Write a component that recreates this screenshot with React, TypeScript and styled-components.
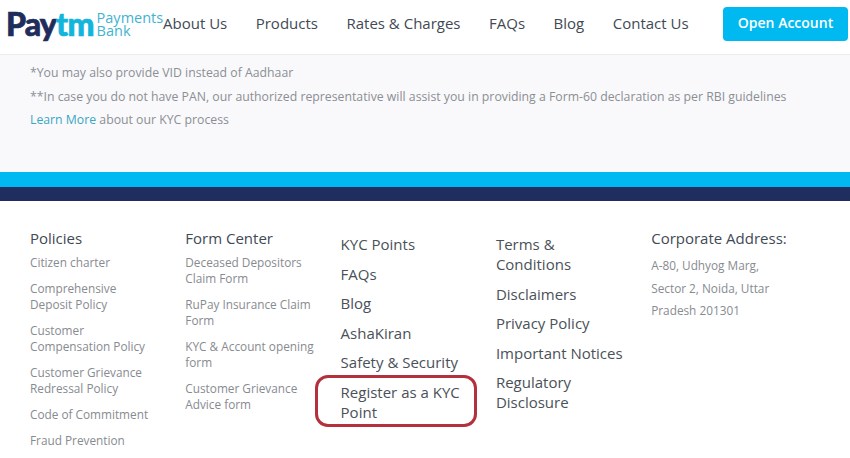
import styled, { createGlobalStyle } from 'styled-components';

const GlobalStyle = createGlobalStyle`
  html, body {
    margin: 0;
    padding: 0;
    background: #fff;
    overflow: hidden;
  }
  body {
    font-family: 'Open Sans', 'Liberation Sans', sans-serif;
  }
`;

const navItems = ['About Us', 'Products', 'Rates & Charges', 'FAQs', 'Blog', 'Contact Us'];

const smallColumns = [
  {
    title: 'Policies',
    links: [
      'Citizen charter',
      'Comprehensive Deposit Policy',
      'Customer Compensation Policy',
      'Customer Grievance Redressal Policy',
      'Code of Commitment',
      'Fraud Prevention',
    ],
  },
  {
    title: 'Form Center',
    links: [
      'Deceased Depositors Claim Form',
      'RuPay Insurance Claim Form',
      'KYC & Account opening form',
      'Customer Grievance Advice form',
    ],
  },
];

const kycLinks = ['KYC Points', 'FAQs', 'Blog', 'AshaKiran', 'Safety & Security'];
const termsLinks = ['Terms & Conditions', 'Disclaimers', 'Privacy Policy', 'Important Notices', 'Regulatory Disclosure'];

function App() {
  return (
    <Page>
      <GlobalStyle />
      <Header>
        <Logo>
          <LogoWord>
            Pay<LogoAccent>tm</LogoAccent>
          </LogoWord>
          <LogoSub>
            Payments
            <br />
            Bank
          </LogoSub>
        </Logo>
        <Nav>
          {navItems.map((item) => (
            <NavItem key={item}>{item}</NavItem>
          ))}
        </Nav>
        <OpenButton>Open Account</OpenButton>
      </Header>
      <Notes>
        <Note>*You may also provide VID instead of Aadhaar</Note>
        <Note>**In case you do not have PAN, our authorized representative will assist you in providing a Form-60 declaration as per RBI guidelines</Note>
        <Note>
          <NoteLink>Learn More</NoteLink> about our KYC process
        </Note>
      </Notes>
      <CyanBand />
      <NavyBand />
      <Footer>
        {smallColumns.map((col) => (
          <Column key={col.title}>
            <ColumnTitle>{col.title}</ColumnTitle>
            {col.links.map((link) => (
              <SmallLink key={link}>{link}</SmallLink>
            ))}
          </Column>
        ))}
        <LinkColumn>
          {kycLinks.map((link) => (
            <BigLink key={link}>{link}</BigLink>
          ))}
          <Highlighted>Register as a KYC Point</Highlighted>
        </LinkColumn>
        <LinkColumn>
          {termsLinks.map((link) => (
            <BigLink key={link}>{link}</BigLink>
          ))}
        </LinkColumn>
        <Column>
          <ColumnTitle>Corporate Address:</ColumnTitle>
          <Address>A-80, Udhyog Marg, Sector 2, Noida, Uttar Pradesh 201301</Address>
        </Column>
      </Footer>
    </Page>
  );
}
export default App;

const Page = styled.div`
  width: 850px;
  height: 458px;
  overflow: hidden;
  background: #fff;
`;

const Header = styled.header`
  display: flex;
  align-items: center;
  height: 47px;
  padding: 0 2px 7px 6px;
  border-bottom: 1px solid #ececec;
`;

const Logo = styled.div`
  display: flex;
  align-items: center;
  width: 157px;
  flex-shrink: 0;
`;

const LogoWord = styled.span`
  flex-shrink: 0;
  font-family: 'Lato', sans-serif;
  font-weight: 900;
  font-size: 32px;
  line-height: 1;
  letter-spacing: -0.8px;
  color: #1f2d5c;
  -webkit-text-stroke: 0.7px currentColor;
`;

const LogoAccent = styled.span`
  color: #12b5dc;
`;

const LogoSub = styled.span`
  flex-shrink: 0;
  margin-left: 3px;
  font-size: 14.5px;
  line-height: 13px;
  color: #3fb3cf;
`;

const Nav = styled.nav`
  display: flex;
  gap: 28.5px;
  flex: 1;
  margin-bottom: 2px;
`;

const NavItem = styled.a`
  font-size: 15px;
  line-height: 22px;
  color: #3f4a55;
  white-space: nowrap;
`;

const OpenButton = styled.button`
  width: 125px;
  height: 34px;
  padding: 0 0 3px;
  border: none;
  border-radius: 4px;
  background: #00b9f1;
  color: #fff;
  font-family: inherit;
  font-size: 14px;
  font-weight: 600;
`;

const Notes = styled.section`
  height: 117px;
  padding-top: 6px;
  padding-left: 30px;
  box-sizing: border-box;
  background: #f9f9fb;
`;

const Note = styled.p`
  margin: 0;
  font-size: 12.27px;
  line-height: 23.5px;
  color: #8b8f94;
`;

const NoteLink = styled.a`
  color: #3aa6c4;
`;

const CyanBand = styled.div`
  height: 15px;
  background: #00b9f1;
`;

const NavyBand = styled.div`
  height: 14px;
  background: #1f2d5f;
`;

const Footer = styled.footer`
  display: grid;
  grid-template-columns: repeat(5, 155.3px);
  padding: 27px 0 0 30px;
`;

const Column = styled.div`
  display: flex;
  flex-direction: column;
  padding-right: 25px;
`;

const ColumnTitle = styled.div`
  font-size: 15px;
  line-height: 20px;
  color: #3f4a55;
  margin-bottom: 6px;
  white-space: nowrap;
`;

const SmallLink = styled.a`
  font-size: 11.8px;
  line-height: 16px;
  color: #878b90;
  margin-bottom: 10px;
`;

const LinkColumn = styled.div`
  display: flex;
  flex-direction: column;
  gap: 9.5px;
  padding-top: 6px;
  padding-right: 20px;
`;

const BigLink = styled.a`
  font-size: 15px;
  line-height: 20px;
  color: #4a5158;
`;

const Highlighted = styled(BigLink)`
  position: relative;

  &::after {
    content: '';
    position: absolute;
    left: -26px;
    right: -1px;
    top: -7px;
    bottom: -5px;
    border: 3px solid #b3303c;
    border-radius: 13px;
  }
`;

const Address = styled.div`
  font-size: 11.8px;
  line-height: 22.5px;
  color: #878b90;
`;
